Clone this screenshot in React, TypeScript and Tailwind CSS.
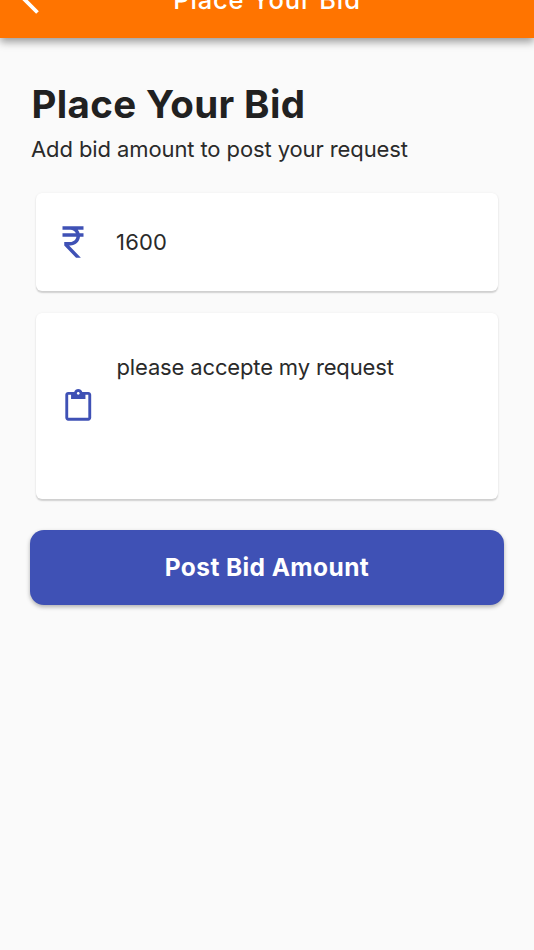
import type { ReactNode } from "react";

interface FieldCardProps {
  icon: ReactNode;
  className: string;
  children: ReactNode;
}

function BackIcon() {
  return (
    <svg className="h-[38px] w-[22px] shrink-0" viewBox="0 0 22 38" fill="none">
      <path d="M19.5 2.5 3 19l16.5 16.5" stroke="white" strokeWidth="3.8" />
    </svg>
  );
}

function RupeeIcon() {
  return (
    <svg className="size-[42px] shrink-0" viewBox="0 0 24 24" fill="currentColor">
      <path d="M13.66 7c-.56-1.18-1.76-2-3.16-2H6V3h12v2h-3.26c.48.58.84 1.26 1.05 2H18v2h-2.02c-.25 2.8-2.61 5-5.48 5h-.73l6.73 7h-2.77L7 14v-2h3.5c1.76 0 3.22-1.3 3.46-3H6V7h7.66z" />
    </svg>
  );
}

function ClipboardIcon() {
  return (
    <svg className="size-[34.5px] shrink-0" viewBox="0 0 24 24" fill="currentColor">
      <path d="M19 2h-4.18C14.4.84 13.3 0 12 0c-1.3 0-2.4.84-2.82 2H5c-1.1 0-2 .9-2 2v16c0 1.1.9 2 2 2h14c1.1 0 2-.9 2-2V4c0-1.1-.9-2-2-2zm-7 0c.55 0 1 .45 1 1s-.45 1-1 1-1-.45-1-1 .45-1 1-1zm7 18H5V4h2v3h10V4h2v16z" />
    </svg>
  );
}

function FieldCard({ icon, className, children }: FieldCardProps) {
  return (
    <div
      className={`mx-[6px] flex items-center rounded-[6px] bg-white text-[#3f51b5] shadow-[0_1.5px_1.5px_rgba(0,0,0,0.16),0_0_3px_rgba(0,0,0,0.04)] ${className}`}
    >
      {icon}
      {children}
    </div>
  );
}

export default function App() {
  return (
    <div className="flex h-[950px] w-[534px] flex-col overflow-hidden bg-[#fafafa] font-['Inter',sans-serif] text-[#212121]">
      <header className="grid h-[38px] shrink-0 grid-cols-[1fr_auto_1fr] grid-rows-[38px] items-end bg-[#ff7400] shadow-[0_4px_8px_rgba(0,0,0,0.38)]">
        <div className="pb-[23.5px] pl-[17.5px]">
          <BackIcon />
        </div>
        <h1 className="pb-[22px] text-[25.5px] leading-[32px] font-medium tracking-[0.85px] text-white">
          Place Your Bid
        </h1>
      </header>

      <main className="flex flex-col px-[30px] pt-[42px]">
        <h2 className="pl-[1.5px] text-[38.5px] leading-[48px] font-bold tracking-[0.35px]">
          Place Your Bid
        </h2>
        <p className="mt-[7px] pl-px text-[22px] leading-[28px] tracking-[-0.1px] text-[#2a2a2a]">
          Add bid amount to post your request
        </p>

        <FieldCard icon={<RupeeIcon />} className="mt-[30px] h-[98px] gap-[22.5px] pl-[15.5px]">
          <span className="text-[22px] tracking-[0.2px] text-[#2a2a2a]">1600</span>
        </FieldCard>

        <FieldCard icon={<ClipboardIcon />} className="mt-[22px] h-[186px] gap-[21.5px] pl-[24.5px]">
          <span className="self-start pt-[40px] text-[22px] leading-[28px] tracking-[-0.15px] text-[#2a2a2a]">
            please accepte my request
          </span>
        </FieldCard>

        <button
          type="button"
          className="mt-[31px] h-[75px] rounded-[14px] bg-[#3f51b5] text-[24.5px] font-bold tracking-[0.4px] text-white shadow-[0_2px_4px_rgba(0,0,0,0.3)]"
        >
          Post Bid Amount
        </button>
      </main>
    </div>
  );
}
